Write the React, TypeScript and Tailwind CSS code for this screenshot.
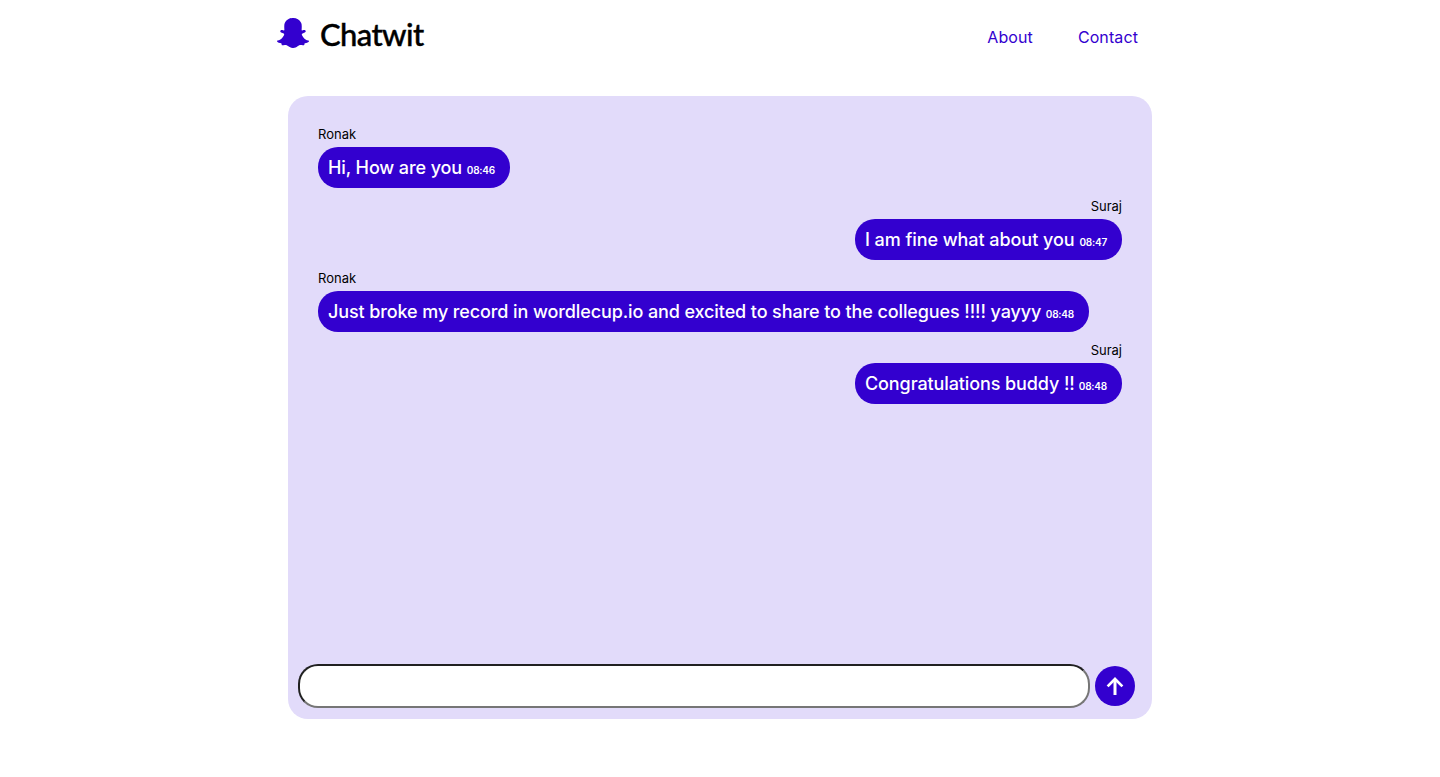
import React from "react";
import { FaSnapchatGhost } from "react-icons/fa";

type Message = { sender: string; text: string; time: string; own?: boolean; width: string };

const messages: Message[] = [
  { sender: "Ronak", text: "Hi, How are you", time: "08:46", width: "w-[192px]" },
  { sender: "Suraj", text: "I am fine what about you", time: "08:47", own: true, width: "w-[267px]" },
  { sender: "Ronak", text: "Just broke my record in wordlecup.io and excited to share to the collegues !!!! yayyy", time: "08:48", width: "w-[771px]" },
  { sender: "Suraj", text: "Congratulations buddy !!", time: "08:48", own: true, width: "w-[267px]" },
];

function Bubble({ sender, text, time, own, width }: Message) {
  return (
    <div className={`flex h-[72px] flex-col ${own ? "items-end" : "items-start"}`}>
      <span className="h-[21px] text-[13px] leading-[17px] text-black">{sender}</span>
      <div className={`flex h-[41px] items-baseline justify-between whitespace-nowrap rounded-[20px] bg-[#3300cf] pl-[10px] pr-[15px] text-white ${width}`}>
        <span className={`text-[18px] font-medium leading-[41px] ${text.startsWith("I am") ? "tracking-[-0.06px]" : "tracking-[-0.106px]"}`}>{text}</span>
        <span className="text-[10px] font-semibold tracking-[-0.2px]">{time}</span>
      </div>
    </div>
  );
}

function SendArrow() {
  return (
    <svg viewBox="0 0 20 20" className="size-5" fill="none" stroke="currentColor">
      <path d="M2.6 10.4 10 3l7.4 7.4" strokeWidth="2.7" />
      <path d="M10 3.5V19" strokeWidth="3" />
    </svg>
  );
}

export default function App() {
  return (
    <div className="flex h-[777px] flex-col items-center bg-white font-['Inter',sans-serif]">
      <header className="flex h-[96px] w-[886px] items-start justify-between">
        <div className="flex items-start gap-[11px] pt-[17px]">
          <FaSnapchatGhost className="size-8 text-[#3300cf]" />
          <span className="font-['Gill_Sans','Lato',sans-serif] text-[31px] font-medium leading-[35px] tracking-[-0.6px] text-black [-webkit-text-stroke:0.4px_black]">Chatwit</span>
        </div>
        <nav className="flex gap-[45px] pr-[25px] pt-[25px] text-base tracking-[0.1px] text-[#3300cf]">
          <a>About</a>
          <a>Contact</a>
        </nav>
      </header>
      <main className="flex h-[623px] w-[864px] flex-col justify-between rounded-[20px] bg-[#e2dbfa]">
        <div className="px-[30px] pt-[30px]">
          {messages.map((m) => (
            <Bubble key={m.text} {...m} />
          ))}
        </div>
        <form className="flex items-center gap-[5px] pb-[11px] pl-[10px]">
          <input className="h-[44px] w-[792px] rounded-[20px] border-2 border-[#767676] bg-white px-3 [border-style:inset]" />
          <button type="button" aria-label="Send" className="flex size-10 items-center justify-center rounded-full bg-[#3300cf] text-white">
            <SendArrow />
          </button>
        </form>
      </main>
    </div>
  );
}
